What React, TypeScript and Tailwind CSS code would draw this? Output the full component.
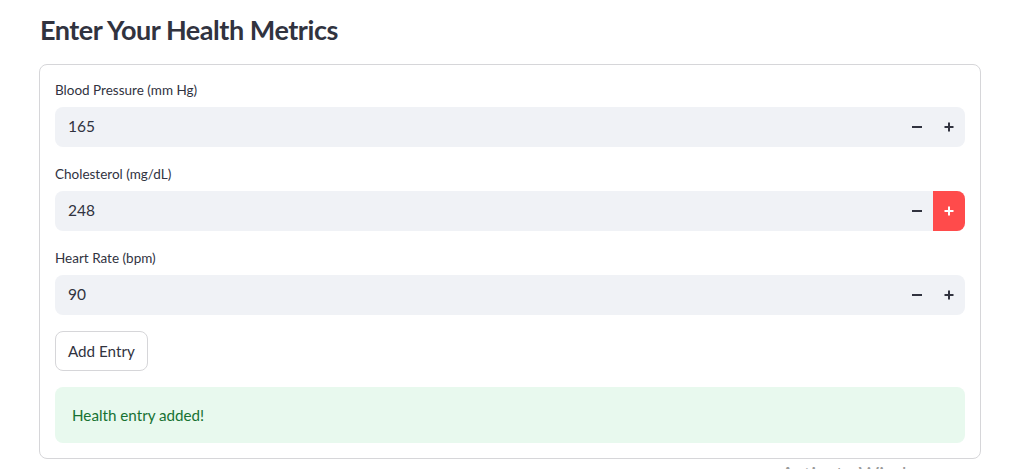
import React from "react";

const font = { fontFamily: "Lato, 'Noto Sans', 'Liberation Sans', sans-serif" };

function Minus({ white }: { white?: boolean }) {
  return (
    <svg width="12" height="12" viewBox="0 0 12 12">
      <rect x="1" y="5" width="10" height="2" fill={white ? "#fff" : "#31333F"} />
    </svg>
  );
}
function Plus({ white }: { white?: boolean }) {
  return (
    <svg width="12" height="12" viewBox="0 0 12 12">
      <rect x="1.5" y="5" width="9" height="2" fill={white ? "#fff" : "#31333F"} />
      <rect x="5" y="1.5" width="2" height="9" fill={white ? "#fff" : "#31333F"} />
    </svg>
  );
}

function NumberField({ label, value, active }: { label: string; value: string; active?: boolean }) {
  return (
    <div className="flex flex-col">
      <div className="h-[28px] flex items-start pt-[1px] text-[13.5px] text-[#31333F]">{label}</div>
      <div className="h-[40px] rounded-[8px] bg-[#F0F2F6] flex items-center overflow-hidden">
        <div className="flex-1 pl-[13px] text-[15.5px] text-[#31333F]">{value}</div>
        <div className="w-[32px] h-full flex items-center justify-center">
          <Minus />
        </div>
        <div
          className={
            active
              ? "w-[32px] h-full flex items-center justify-center bg-[#FF4B4B]"
              : "w-[32px] h-full flex items-center justify-center"
          }
        >
          <Plus white={active} />
        </div>
      </div>
    </div>
  );
}

export default function App() {
  return (
    <div className="relative w-[1033px] h-[469px] overflow-hidden bg-white" style={font}>
      <div className="pl-[40px] pt-[12px]">
        <h3 className="text-[27px] font-bold text-[#31333F] leading-[36px] tracking-[-0.45px]">
          Enter Your Health Metrics
        </h3>
      </div>
      <div className="ml-[39px] mt-[16px] w-[942px] border border-[#D6D6D9] rounded-[8px] px-[15px] pt-[14px] pb-[15px] flex flex-col gap-[16px]">
        <div className="flex flex-col gap-[16px]">
          <NumberField label="Blood Pressure (mm Hg)" value="165" />
          <NumberField label="Cholesterol (mg/dL)" value="248" active />
          <NumberField label="Heart Rate (bpm)" value="90" />
        </div>
        <div>
          <button className="h-[40px] px-[12px] rounded-[8px] border border-[#D6D6D9] bg-white text-[15.2px] text-[#31333F]">
            Add Entry
          </button>
        </div>
        <div className="h-[56px] rounded-[8px] bg-[#E8F9EE] flex items-center px-[17px] text-[15.2px] text-[#177233]">
          Health entry added!
        </div>
      </div>
      <div className="absolute left-[781px] top-[458px] text-[20px] text-[#9a9a9a] whitespace-nowrap">
        Activate Windows
      </div>
    </div>
  );
}
